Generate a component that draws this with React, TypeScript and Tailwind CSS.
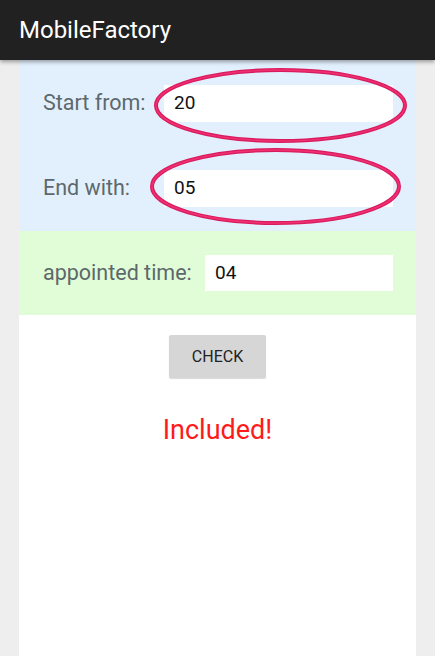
import React from "react";

const Row: React.FC<{ label: string; value: string; labelW: string; h: string }> = ({ label, value, labelW, h }) => (
  <div className="flex items-center pl-[24px] pr-[23px]">
    <span className={`${labelW} shrink-0 text-[21.5px] text-[#5d686c]`}>{label}</span>
    <div className={`flex-1 ${h} bg-white flex items-center pl-[10px] text-[19px] text-[#111]`}>{value}</div>
  </div>
);

export default function App() {
  return (
    <div className="relative min-h-[656px] h-[656px] flex flex-col bg-[#eeeeee] overflow-hidden" style={{ fontFamily: "Roboto, 'Noto Sans', sans-serif" }}>
      <header className="h-[60px] shrink-0 bg-[#212121] flex items-center px-[19px] shadow-[0_2px_4px_rgba(0,0,0,0.35)] z-10">
        <h1 className="text-[24px] text-white">MobileFactory</h1>
      </header>

      <main className="mx-[19px] flex-1 bg-white flex flex-col">
        <section className="bg-[#e2f0fd] pt-[25px] pb-[24px] flex flex-col gap-[48px]">
          <Row label="Start from:" value="20" labelW="w-[121px]" h="h-[37px]" />
          <Row label="End with:" value="05" labelW="w-[121px]" h="h-[37px]" />
        </section>

        <section className="bg-[#e1fdd7] h-[84px] flex flex-col justify-center">
          <Row label="appointed time:" value="04" labelW="w-[162px]" h="h-[36px]" />
        </section>

        <div className="flex flex-col items-center pt-[20px]">
          <button className="w-[97px] h-[43px] rounded-[2px] bg-[#d6d6d6] text-[16px] text-[#222] shadow-[0_1px_1px_rgba(0,0,0,0.15)]">
            CHECK
          </button>
          <p className="mt-[32px] text-[27px] text-[#ff1a1a]">Included!</p>
        </div>
      </main>

      <svg className="absolute inset-0 pointer-events-none z-20" width="435" height="656">
        <ellipse cx="280.5" cy="105.5" rx="124.5" ry="35.5" fill="none" stroke="#d81b60" strokeWidth="4" />
        <ellipse cx="280.5" cy="105.5" rx="124.5" ry="35.5" fill="none" stroke="#f0306f" strokeWidth="1.5" />
        <ellipse cx="275.5" cy="186.5" rx="123.5" ry="36.5" fill="none" stroke="#d81b60" strokeWidth="4" />
        <ellipse cx="275.5" cy="186.5" rx="123.5" ry="36.5" fill="none" stroke="#f0306f" strokeWidth="1.5" />
      </svg>
    </div>
  );
}
